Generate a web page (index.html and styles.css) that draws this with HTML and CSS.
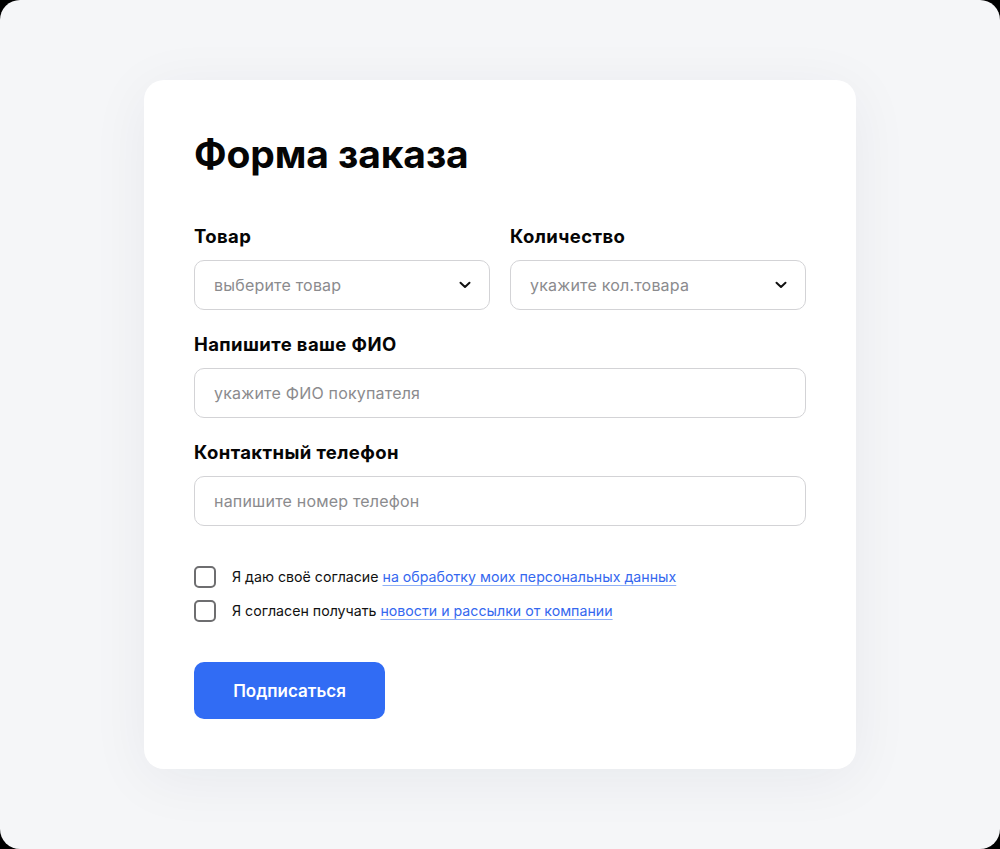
FILE: index.html
```html
<!DOCTYPE html>
<html lang="ru">
<head>
<meta charset="utf-8">
<title>Форма заказа</title>
<link rel="stylesheet" href="styles.css">
</head>
<body>
<div class="frame">
  <form class="card">
    <h1 class="title">Форма заказа</h1>
    <div class="row two">
      <div class="field">
        <label class="label">Товар</label>
        <div class="control select">
          <span class="placeholder">выберите товар</span>
          <svg class="chev" width="12" height="8" viewBox="0 0 12 8"><path d="M1.5 1.8 6 6 10.5 1.8" fill="none" stroke="#111" stroke-width="2" stroke-linecap="round" stroke-linejoin="round"/></svg>
        </div>
      </div>
      <div class="field">
        <label class="label">Количество</label>
        <div class="control select">
          <span class="placeholder">укажите кол.товара</span>
          <svg class="chev" width="12" height="8" viewBox="0 0 12 8"><path d="M1.5 1.8 6 6 10.5 1.8" fill="none" stroke="#111" stroke-width="2" stroke-linecap="round" stroke-linejoin="round"/></svg>
        </div>
      </div>
    </div>
    <div class="field">
      <label class="label">Напишите ваше ФИО</label>
      <div class="control"><span class="placeholder">укажите ФИО покупателя</span></div>
    </div>
    <div class="field">
      <label class="label">Контактный телефон</label>
      <div class="control"><span class="placeholder">напишите номер телефон</span></div>
    </div>
    <div class="checks">
      <label class="check"><span class="box"></span><span>Я даю своё согласие <a href="#" class="link">на обработку моих персональных данных</a></span></label>
      <label class="check"><span class="box"></span><span>Я согласен получать <a href="#" class="link">новости и рассылки от компании</a></span></label>
    </div>
    <button type="button" class="btn">Подписаться</button>
  </form>
</div>
</body>
</html>
```

FILE: styles.css
```css
html, body {
  margin: 0;
  padding: 0;
  background: #000;
}
body {
  font-family: Inter, "Noto Sans", sans-serif;
  color: #0b0b0b;
}
.frame {
  width: 1000px;
  height: 849px;
  box-sizing: border-box;
  background: #f5f6f8;
  border-radius: 20px;
  display: flex;
  justify-content: center;
  align-items: flex-start;
  padding-top: 80px;
}
.card {
  width: 712px;
  box-sizing: border-box;
  background: #fff;
  border-radius: 20px;
  padding: 50px;
  box-shadow: 0 10px 60px rgba(20, 30, 60, 0.06);
  display: flex;
  flex-direction: column;
  gap: 21px;
}
.title {
  margin: 0 0 24px;
  font-size: 39px;
  line-height: 48px;
  font-weight: 700;
  letter-spacing: -0.1px;
  color: #050505;
}
.row.two {
  display: grid;
  grid-template-columns: 1fr 1fr;
  gap: 20px;
}
.field {
  display: flex;
  flex-direction: column;
  gap: 13px;
}
.label {
  font-size: 18.5px;
  line-height: 24px;
  font-weight: 700;
  letter-spacing: 0.4px;
  color: #050505;
  position: relative;
  top: 1px;
}
.control {
  height: 50px;
  box-sizing: border-box;
  border: 1px solid #d3d3d6;
  border-radius: 10px;
  padding: 0 20px 0 19px;
  display: flex;
  align-items: center;
  justify-content: space-between;
}
.select {
  padding-right: 18px;
}
.placeholder {
  font-size: 16px;
  letter-spacing: 0.2px;
  color: #8b8b8e;
}
.chev {
  display: block;
}
.checks {
  margin-top: 19px;
  display: flex;
  flex-direction: column;
  gap: 12px;
}
.check {
  display: flex;
  align-items: center;
  gap: 16px;
  font-size: 14.2px;
  line-height: 22px;
  color: #111;
}
.box {
  width: 22px;
  height: 22px;
  box-sizing: border-box;
  border: 2px solid #6e6e70;
  border-radius: 5px;
  flex: none;
}
.link {
  color: #3568ef;
  text-decoration: underline;
  text-decoration-color: #8fb0f7;
  text-underline-offset: 3px;
}
.btn {
  margin-top: 19px;
  align-self: flex-start;
  width: 191px;
  height: 57px;
  border: none;
  border-radius: 10px;
  background: #316cf4;
  color: #fff;
  font-family: Inter, "Noto Sans", sans-serif;
  font-size: 17px;
  font-weight: 600;
  cursor: pointer;
}
```
